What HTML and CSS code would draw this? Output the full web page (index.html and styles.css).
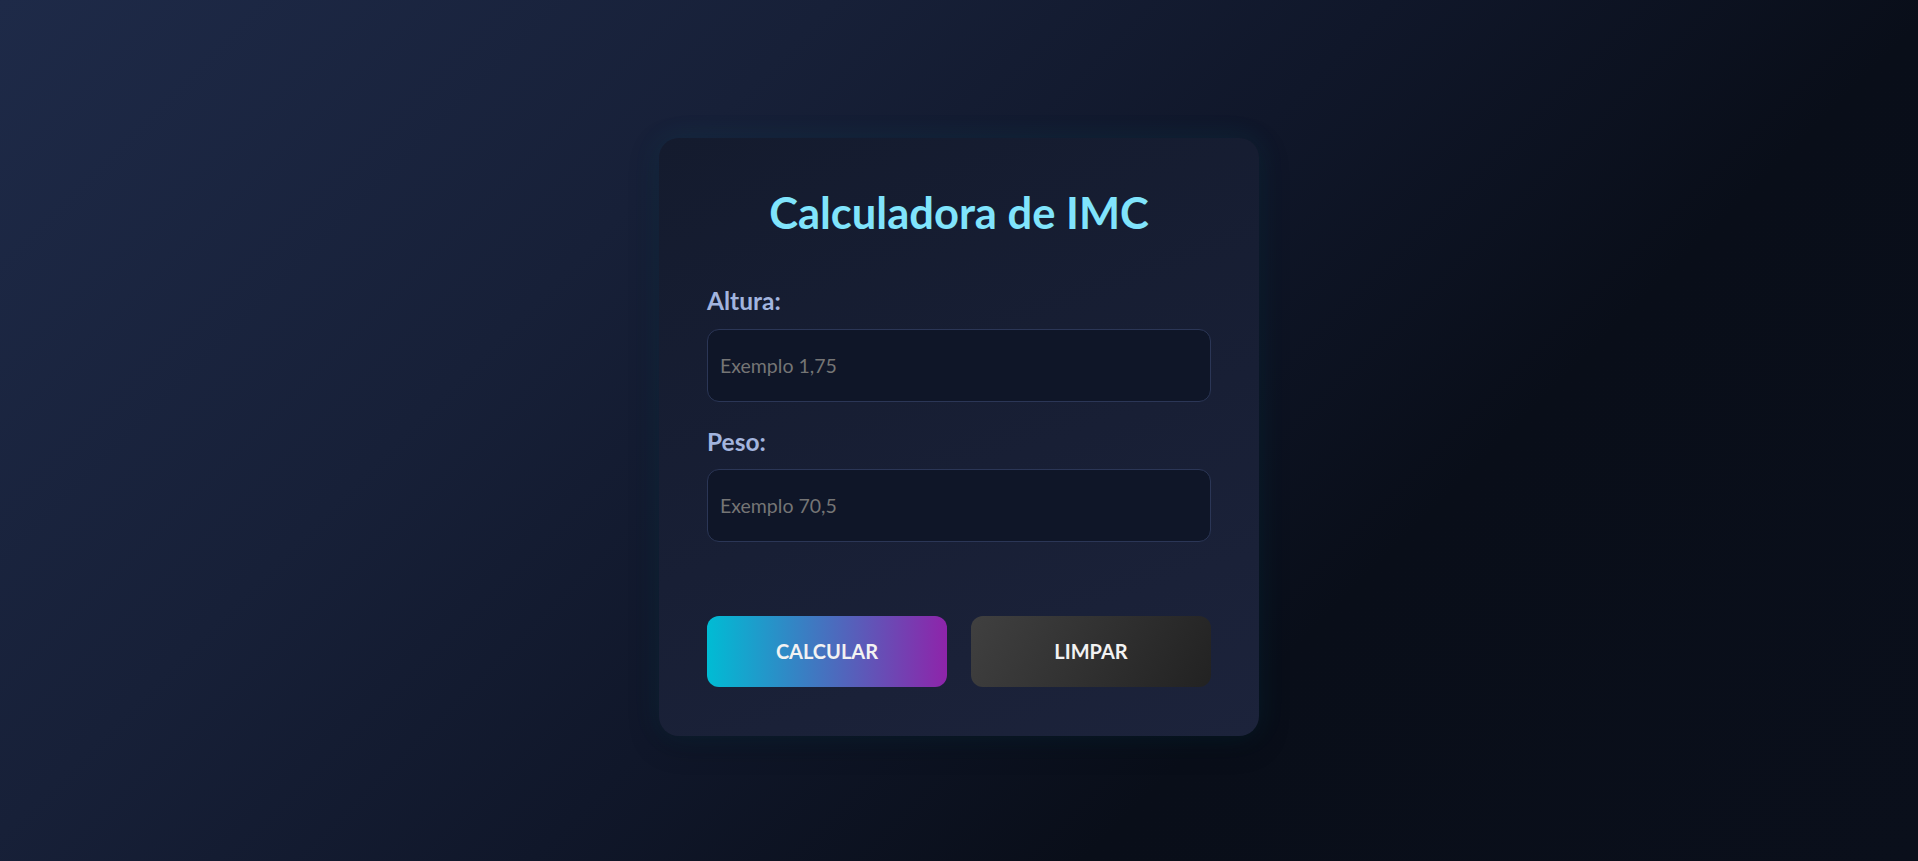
FILE: index.html
```html
<!DOCTYPE html>
<html lang="pt-BR">
<head>
<meta charset="UTF-8">
<title>Calculadora de IMC</title>
<link rel="stylesheet" href="styles.css">
</head>
<body>
<main class="page">
  <section class="card">
    <h1 class="title">Calculadora de IMC</h1>
    <form class="form">
      <div class="field">
        <label class="label" for="altura">Altura:</label>
        <input class="input" id="altura" type="text" placeholder="Exemplo 1,75">
      </div>
      <div class="field">
        <label class="label" for="peso">Peso:</label>
        <input class="input" id="peso" type="text" placeholder="Exemplo 70,5">
      </div>
      <div class="actions">
        <button class="btn btn-calc" type="button">CALCULAR</button>
        <button class="btn btn-clear" type="reset">LIMPAR</button>
      </div>
    </form>
  </section>
</main>
</body>
</html>
```

FILE: styles.css
```css
* { box-sizing: border-box; }

html, body {
  margin: 0;
  padding: 0;
  min-height: 100%;
}

body {
  font-family: Lato, "Noto Sans", sans-serif;
  background: linear-gradient(135deg, #1e2a48 0%, #172038 30%, #10172a 50%, #090e19 70%, #0a0f1b 100%);
  background-attachment: fixed;
  min-height: 100vh;
}

.page {
  min-height: 100vh;
  display: flex;
  align-items: center;
  justify-content: center;
  padding-top: 13px;
}

.card {
  width: 600px;
  padding: 48px 48px 49px;
  border-radius: 20px;
  background: linear-gradient(160deg, #141b2e 0%, #181f35 55%, #1c233b 100%);
  box-shadow: 0 0 28px rgba(0, 200, 240, 0.09), 0 8px 30px rgba(0, 0, 0, 0.25);
}

.title {
  margin: 0 0 48px;
  font-size: 43.5px;
  line-height: 1.2;
  font-weight: 700;
  text-align: center;
  color: #80e4fc;
}

.form {
  display: flex;
  flex-direction: column;
}

.field {
  display: flex;
  flex-direction: column;
  margin-bottom: 25px;
}

.field + .field {
  margin-bottom: 74px;
}

.label {
  font-size: 24.5px;
  line-height: 1.2;
  font-weight: 700;
  color: #a2b4de;
  margin-bottom: 13px;
}

.input {
  height: 73px;
  width: 100%;
  padding: 0 12px;
  font-family: Lato, "Noto Sans", sans-serif;
  font-size: 19.5px;
  color: #e5e7eb;
  background: #0f1628;
  border: 1px solid #2b3656;
  border-radius: 12px;
  outline: none;
}

.input::placeholder {
  color: #757575;
}

.actions {
  display: grid;
  grid-template-columns: 1fr 1fr;
  gap: 24px;
}

.btn {
  height: 71px;
  border: none;
  border-radius: 12px;
  font-family: Lato, "Noto Sans", sans-serif;
  font-size: 20px;
  font-weight: 700;
  color: #f2f2f2;
  cursor: pointer;
}

.btn-calc {
  background: linear-gradient(90deg, #00bcd4 0%, #8e24aa 100%);
}

.btn-clear {
  background: linear-gradient(120deg, #404040 0%, #222222 100%);
}
```
